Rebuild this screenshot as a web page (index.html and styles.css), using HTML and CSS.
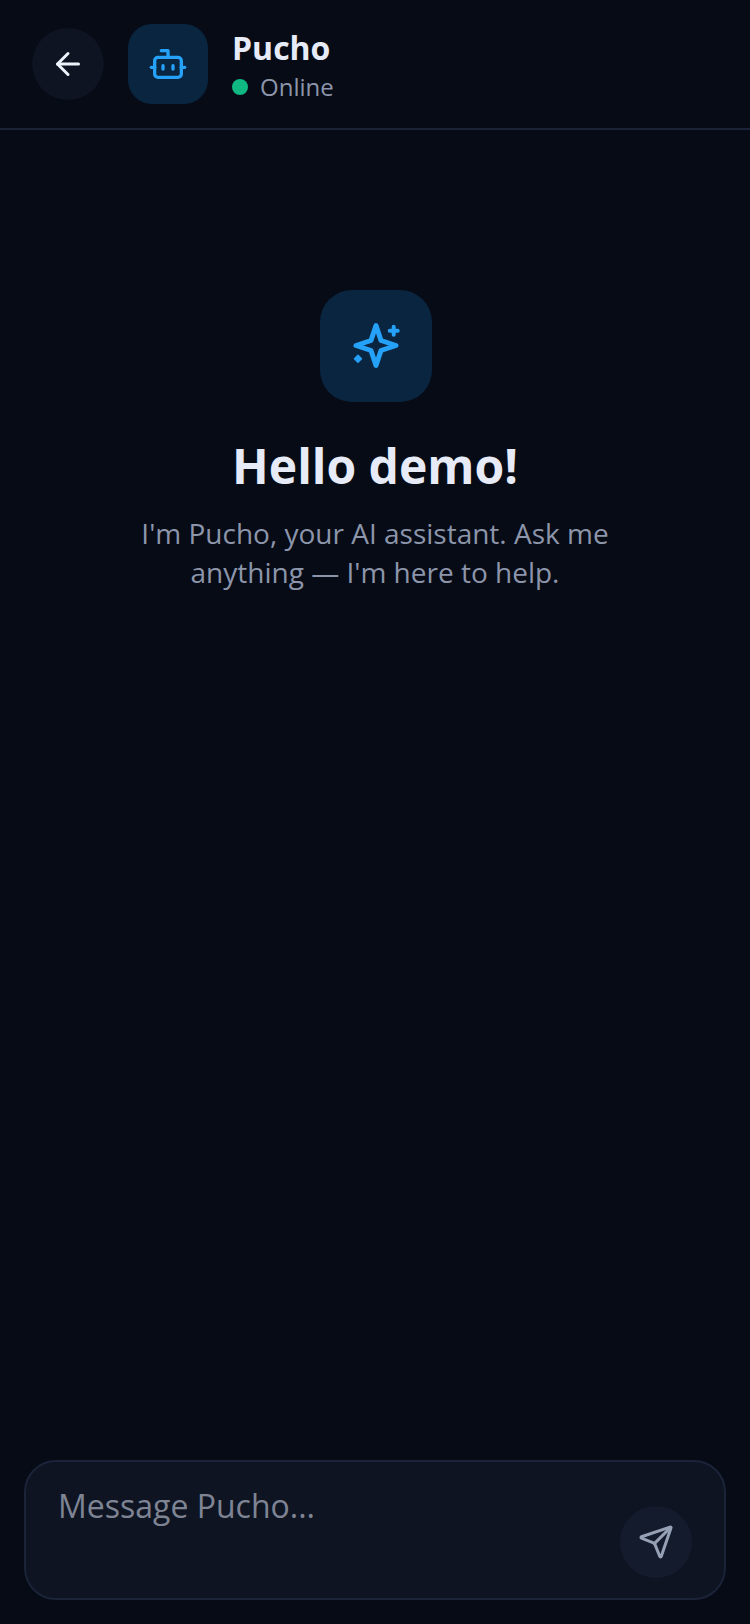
FILE: index.html
```html
<!DOCTYPE html>
<html lang="en">
<head>
    <meta charset="UTF-8">
    <meta name="viewport" content="width=device-width, initial-scale=1.0">
    <title>Pucho</title>
    <link rel="stylesheet" href="styles.css">
</head>
<body>

<div class="chat">
    <header class="chat-header">
        <button class="back-button" aria-label="Back">
            <svg class="icon" width="36" height="36" viewBox="0 0 24 24"><path d="m12 19-7-7 7-7"/><path d="M19 12H5"/></svg>
        </button>
        <div class="avatar">
            <svg class="icon" width="40" height="40" viewBox="0 0 24 24"><path d="M12 8V4H8"/><rect width="16" height="12" x="4" y="8" rx="2"/><path d="M2 14h2"/><path d="M20 14h2"/><path d="M15 13v2"/><path d="M9 13v2"/></svg>
        </div>
        <div class="agent">
            <div class="agent-name">Pucho</div>
            <div class="agent-status"><span class="status-dot"></span>Online</div>
        </div>
    </header>

    <main class="welcome">
        <div class="welcome-icon">
            <svg class="icon icon-sparkle" width="56" height="56" viewBox="0 0 56 56"><path class="sparkle-star" d="M28 7.500L33 22.500L48 27.500L33 32.500L28 47.500L23 32.500L8 27.500L23 22.500Z"/><path d="M45.700 8.700v8"/><path d="M41.700 12.700h8"/><path class="sparkle-dot" d="M10 37.200l3.500 3.500-3.500 3.500-3.500-3.500z"/></svg>
        </div>
        <h1>Hello demo!</h1>
        <p>I'm Pucho, your AI assistant. Ask me anything — I'm here to help.</p>
    </main>

    <footer class="composer">
        <div class="composer-box">
            <textarea class="composer-input" placeholder="Message Pucho..." rows="1"></textarea>
            <button class="send-button" aria-label="Send">
                <svg class="icon" width="36" height="36" viewBox="0 0 24 24"><path d="M14.536 21.686a.5.5 0 0 0 .937-.024l6.5-19a.496.496 0 0 0-.635-.635l-19 6.5a.5.5 0 0 0-.024.937l7.93 3.18a2 2 0 0 1 1.112 1.11z"/><path d="m21.854 2.147-10.94 10.939"/></svg>
            </button>
        </div>
    </footer>
</div>

</body>
</html>
```
FILE: styles.css
```css
* {
    box-sizing: border-box;
}
body {
    margin: 0;
    background-color: #060b16;
    font-family: "Open Sans", sans-serif;
}
button {
    border: none;
    padding: 0;
    cursor: pointer;
}
.icon {
    fill: none;
    stroke: currentColor;
    stroke-width: 2;
    stroke-linecap: round;
    stroke-linejoin: round;
}
.icon-sparkle {
    stroke-width: 4;
}
.sparkle-star {
    stroke-width: 5;
}
.sparkle-dot {
    fill: currentColor;
    stroke-width: 1.5;
}
.chat {
    display: flex;
    flex-direction: column;
    height: 100vh;
}
.chat-header {
    display: flex;
    align-items: center;
    height: 130px;
    padding: 0 32px;
    border-bottom: 2px solid #1b2338;
}
.back-button {
    display: flex;
    justify-content: center;
    align-items: center;
    width: 72px;
    height: 72px;
    margin-right: 24px;
    border-radius: 50%;
    background-color: #0f1422;
    color: #eef2fb;
}
.avatar {
    display: flex;
    justify-content: center;
    align-items: center;
    width: 80px;
    height: 80px;
    margin-right: 24px;
    border-radius: 24px;
    background-color: #0a2540;
    color: #25a1f7;
}
.agent-name {
    font-size: 32px;
    font-weight: 700;
    line-height: 44px;
    color: #e6ebf7;
}
.agent-status {
    display: flex;
    align-items: center;
    margin-top: 1px;
    font-size: 24px;
    line-height: 32px;
    color: #8c95aa;
}
.status-dot {
    width: 16px;
    height: 16px;
    margin-right: 12px;
    border-radius: 50%;
    background-color: #10b981;
}
.welcome {
    flex: 1;
    display: flex;
    flex-direction: column;
    align-items: center;
    padding-top: 160px;
    text-align: center;
}
.welcome-icon {
    display: flex;
    justify-content: center;
    align-items: center;
    width: 112px;
    height: 112px;
    margin-left: 2px;
    margin-bottom: 34px;
    border-radius: 32px;
    background-color: #0a2540;
    color: #25a1f7;
}
.welcome h1 {
    margin: 0 0 18px;
    font-size: 48px;
    font-weight: 700;
    line-height: 60px;
    color: #e6ebf7;
}
.welcome p {
    width: 520px;
    margin: 0;
    font-size: 28px;
    line-height: 39.2px;
    color: #8c95aa;
}
.composer {
    padding: 0 24px 24px;
}
.composer-box {
    display: flex;
    align-items: flex-end;
    height: 140px;
    padding: 0 32px 20px;
    border: 2px solid #1b2338;
    border-radius: 32px;
    background-color: #0e1422;
}
.composer-input {
    flex: 1;
    align-self: flex-start;
    height: 90px;
    margin-top: 22px;
    padding: 0;
    border: none;
    outline: none;
    resize: none;
    background: transparent;
    font-family: "Open Sans", sans-serif;
    font-size: 32px;
    line-height: 44px;
    color: #e6ebf7;
}
.composer-input::placeholder {
    color: #7f8494;
    opacity: 1;
}
.send-button {
    display: flex;
    justify-content: center;
    align-items: center;
    width: 72px;
    height: 72px;
    border-radius: 50%;
    background-color: #141b2c;
    color: #97a1b6;
}
```
